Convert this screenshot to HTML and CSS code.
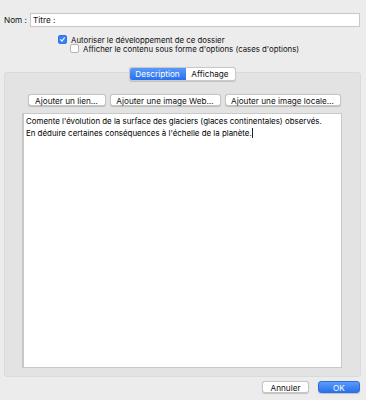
FILE: index.html
```html
<!DOCTYPE html>
<html lang="fr">
<head>
<meta charset="utf-8">
<link rel="stylesheet" href="styles.css">
</head>
<body>
<div class="dialog">
  <div class="name-row">
    <span class="label">Nom :</span>
    <div class="field">Titre :</div>
  </div>
  <div class="check-row first">
    <span class="box checked"><svg viewBox="0 0 8 8" width="8" height="8"><path d="M1.8 4.2 L3.3 5.8 L6.3 2" fill="none" stroke="#fff" stroke-width="1.2" stroke-linecap="round" stroke-linejoin="round"/></svg></span>
    <span>Autoriser le développement de ce dossier</span>
  </div>
  <div class="check-row second">
    <span class="box"></span>
    <span>Afficher le contenu sous forme d'options (cases d'options)</span>
  </div>
  <div class="panel">
    <div class="tabs">
      <span class="tab active">Description</span>
      <span class="tab">Affichage</span>
    </div>
    <div class="actions">
      <span class="btn b1">Ajouter un lien…</span>
      <span class="btn b2">Ajouter une image Web…</span>
      <span class="btn b3">Ajouter une image locale…</span>
    </div>
    <div class="text">Comente l'évolution de la surface des glaciers (glaces continentales) observés.<br>En déduire certaines conséquences à l'échelle de la planète.<span class="caret"></span></div>
  </div>
  <div class="footer">
    <span class="btn cancel">Annuler</span>
    <span class="btn ok">OK</span>
  </div>
</div>
</body>
</html>
```

FILE: styles.css
```css
html, body {
  margin: 0;
  padding: 0;
  background: #ececec;
}
body {
  font-family: Inter, "Liberation Sans", Arial, sans-serif;
  font-size: 8.2px;
  color: #111;
  width: 366px;
  height: 400px;
  overflow: hidden;
}
.dialog {
  display: flex;
  flex-direction: column;
}
.name-row {
  display: flex;
  align-items: center;
  margin-top: 13px;
  padding-left: 4px;
  height: 14px;
}
.label {
  width: 26px;
}
.field {
  width: 326px;
  height: 12px;
  background: #fff;
  border: 1px solid #c8c8c8;
  padding-left: 2px;
  line-height: 12px;
  box-sizing: content-box;
}
.check-row {
  display: flex;
  align-items: center;
  gap: 4px;
  height: 9px;
  font-size: 7.8px;
}
.check-row.first {
  margin-top: 8px;
  padding-left: 58px;
}
.check-row.second {
  padding-left: 70px;
}
.box {
  width: 7px;
  height: 7px;
  border-radius: 2px;
  background: #fff;
  border: 0.5px solid #b5b5b5;
  display: flex;
  align-items: center;
  justify-content: center;
}
.box.checked {
  background: #3c82f5;
  border-color: #2f72e0;
}
.box svg { width: 7px; height: 7px; }
.panel {
  margin: 19px 5px 0 4px;
  height: 305px;
  background: #e3e3e3;
  border: 1px solid #dadada;
  border-radius: 3px;
  display: flex;
  flex-direction: column;
  align-items: stretch;
  padding: 0 18px 8px 17px;
  box-sizing: border-box;
}
.tabs {
  align-self: center;
  margin-top: -6px;
  display: flex;
  height: 12px;
  background: #fff;
  border: 0.5px solid #c9c9c9;
  border-radius: 3px;
  box-shadow: 0 0.5px 1px rgba(0,0,0,0.15);
  overflow: hidden;
}
.tab {
  line-height: 12px;
  text-align: center;
}
.tab:first-child { width: 56px; }
.tab:last-child { width: 49px; }
.tab.active {
  background: linear-gradient(#5a9af8, #2670ee);
  color: #fff;
}
.actions {
  display: flex;
  justify-content: center;
  gap: 4px;
  margin-top: 13px;
  padding-left: 4px;
}
.btn {
  display: inline-block;
  height: 12px;
  line-height: 12px;
  background: #fff;
  border: 0.5px solid #c6c6c6;
  border-radius: 3px;
  box-shadow: 0 0.5px 1px rgba(0,0,0,0.18);
  text-align: center;
  box-sizing: border-box;
}
.b1 { width: 78px; }
.b2 { width: 111px; }
.b3 { width: 116px; }
.text {
  margin-top: 7px;
  flex: 1;
  background: #fff;
  border: 1px solid #c8c8c8;
  border-left-width: 2px;
  padding: 1px 2px;
  line-height: 12px;
  font-size: 7.9px;
  color: #000;
}
.caret {
  display: inline-block;
  width: 1px;
  height: 10px;
  background: #222;
  vertical-align: -2px;
}
.footer {
  display: flex;
  justify-content: flex-end;
  gap: 9px;
  margin-top: 4px;
  padding-right: 6px;
}
.cancel { width: 47px; }
.ok {
  width: 42px;
  background: linear-gradient(#5c9bf8, #2a72ef);
  border-color: #2a6ee0;
  color: #fff;
}
```
